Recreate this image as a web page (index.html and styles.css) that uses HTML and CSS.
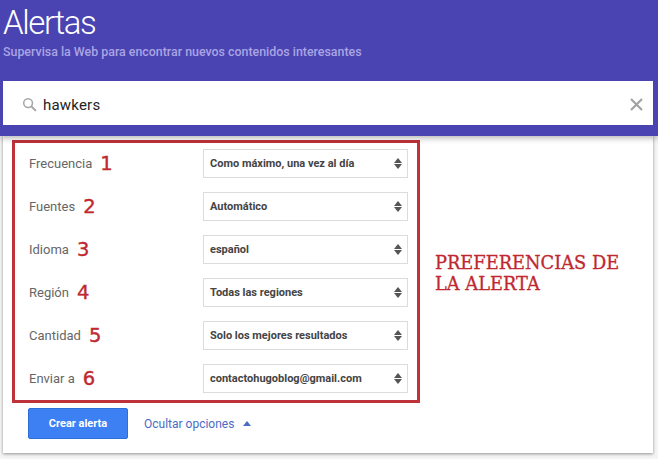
FILE: index.html
```html
<!DOCTYPE html>
<html lang="es">
<head>
    <meta charset="UTF-8">
    <title>Alertas</title>
    <link rel="stylesheet" href="styles.css">
</head>
<body>
    <header class="hero">
        <h1>Alertas</h1>
        <p class="subtitle">Supervisa la Web para encontrar nuevos contenidos interesantes</p>
        <div class="search-box">
            <svg class="search-icon" width="15" height="15" viewBox="0 0 16 16">
                <circle cx="6.5" cy="6.5" r="4.7" fill="none" stroke="#a6a6a6" stroke-width="1.6"/>
                <path d="M10 10l4.8 4.8" stroke="#a6a6a6" stroke-width="2.2"/>
            </svg>
            <span class="search-text">hawkers</span>
            <svg class="clear-icon" width="13" height="13" viewBox="0 0 13 13">
                <path d="M1 1l11 11M12 1L1 12" stroke="#a3a3a3" stroke-width="2.2"/>
            </svg>
        </div>
    </header>

    <main class="card">
        <div class="options-row">
            <div class="prefs-box">
                <div class="pref-row">
                    <span class="pref-label">Frecuencia</span>
                    <span class="pref-num">1</span>
                    <div class="select-box">
                        <span>Como máximo, una vez al día</span>
                        <span class="arrows"><i class="up"></i><i class="down"></i></span>
                    </div>
                </div>
                <div class="pref-row">
                    <span class="pref-label">Fuentes</span>
                    <span class="pref-num">2</span>
                    <div class="select-box">
                        <span>Automático</span>
                        <span class="arrows"><i class="up"></i><i class="down"></i></span>
                    </div>
                </div>
                <div class="pref-row">
                    <span class="pref-label">Idioma</span>
                    <span class="pref-num">3</span>
                    <div class="select-box">
                        <span>español</span>
                        <span class="arrows"><i class="up"></i><i class="down"></i></span>
                    </div>
                </div>
                <div class="pref-row">
                    <span class="pref-label">Región</span>
                    <span class="pref-num">4</span>
                    <div class="select-box">
                        <span>Todas las regiones</span>
                        <span class="arrows"><i class="up"></i><i class="down"></i></span>
                    </div>
                </div>
                <div class="pref-row">
                    <span class="pref-label">Cantidad</span>
                    <span class="pref-num">5</span>
                    <div class="select-box">
                        <span>Solo los mejores resultados</span>
                        <span class="arrows"><i class="up"></i><i class="down"></i></span>
                    </div>
                </div>
                <div class="pref-row">
                    <span class="pref-label">Enviar a</span>
                    <span class="pref-num">6</span>
                    <div class="select-box">
                        <span>contactohugoblog@gmail.com</span>
                        <span class="arrows"><i class="up"></i><i class="down"></i></span>
                    </div>
                </div>
            </div>
            <p class="note">PREFERENCIAS DE<br>LA ALERTA</p>
        </div>

        <div class="actions">
            <button class="create-button">Crear alerta</button>
            <a href="#" class="toggle-link">Ocultar opciones</a>
            <span class="toggle-arrow"></span>
        </div>
    </main>
</body>
</html>
```

FILE: styles.css
```css
* {
    margin: 0;
    padding: 0;
    box-sizing: border-box;
    font-family: Roboto, Arial, sans-serif;
}

body {
    background-color: #f4f4f4;
    width: 658px;
    height: 459px;
    overflow: hidden;
}

.hero {
    background: #4a43b2;
    height: 136px;
    padding: 3px 5px 0 3px;
    box-shadow: 0 2px 6px rgba(0, 0, 0, 0.3);
    position: relative;
}

h1 {
    font-size: 33px;
    line-height: 39px;
    font-weight: 300;
    letter-spacing: -1.4px;
    color: #ffffff;
}

.subtitle {
    font-size: 12.4px;
    line-height: 16px;
    margin-top: 2px;
    color: #a9a5e3;
    font-weight: 500;
}

.search-box {
    background: white;
    height: 44px;
    margin-top: 21px;
    display: flex;
    align-items: center;
    padding: 0 10px 0 19px;
}

.search-icon {
    margin-top: 2px;
}

.search-text {
    font-size: 15px;
    color: #222222;
    margin-left: 6px;
    margin-top: 3px;
    flex-grow: 1;
    letter-spacing: 0.2px;
}

.clear-icon {
    margin-top: 2px;
}

.card {
    background: white;
    margin: 0 5px 0 3px;
    height: 317px;
    padding-top: 4px;
    padding-left: 9px;
    box-shadow: 0 1px 3px rgba(0, 0, 0, 0.4);
}

.options-row {
    display: flex;
    align-items: flex-start;
}

.prefs-box {
    width: 408px;
    height: 263px;
    border: 3px solid #c0323a;
    padding: 6px 9px 0 14px;
    display: flex;
    flex-direction: column;
    gap: 14px;
}

.pref-row {
    display: flex;
    align-items: center;
    height: 29px;
}

.pref-label {
    font-size: 13px;
    color: #666666;
}

.pref-num {
    font-family: "DejaVu Sans", sans-serif;
    font-size: 19.5px;
    -webkit-text-stroke: 0.4px #c0282f;
    color: #c0282f;
    margin-left: 8px;
    flex-grow: 1;
}

.select-box {
    width: 205px;
    height: 29px;
    flex-shrink: 0;
    border: 1px solid #dcdcdc;
    display: flex;
    align-items: center;
    justify-content: space-between;
    padding: 0 2px 0 6px;
    font-size: 11px;
    font-weight: 700;
    color: #444444;
}

.arrows {
    width: 8px;
    margin-right: 3px;
    display: flex;
    flex-direction: column;
    gap: 1px;
}

.up, .down {
    display: block;
    width: 0;
    height: 0;
    border-left: 4px solid transparent;
    border-right: 4px solid transparent;
}

.up {
    border-bottom: 5px solid #555555;
}

.down {
    border-top: 5px solid #555555;
}

.note {
    font-family: "DejaVu Serif", serif;
    font-size: 17.8px;
    line-height: 21px;
    -webkit-text-stroke: 0.3px #c0282f;
    color: #c0282f;
    margin-left: 15px;
    margin-top: 112px;
}

.actions {
    display: flex;
    align-items: center;
    margin-top: 5px;
    padding-left: 16px;
}

.create-button {
    background: #3d80f4;
    width: 100px;
    height: 31px;
    border: 1px solid #2f6fd8;
    border-radius: 2px;
    color: white;
    font-size: 11px;
    font-weight: 700;
}

.toggle-link {
    color: #4a6cc4;
    text-decoration: none;
    font-size: 12px;
    margin-left: 16px;
}

.toggle-arrow {
    width: 0;
    height: 0;
    margin-left: 9px;
    border-left: 4px solid transparent;
    border-right: 4px solid transparent;
    border-bottom: 5px solid #4a6cc4;
}
```
